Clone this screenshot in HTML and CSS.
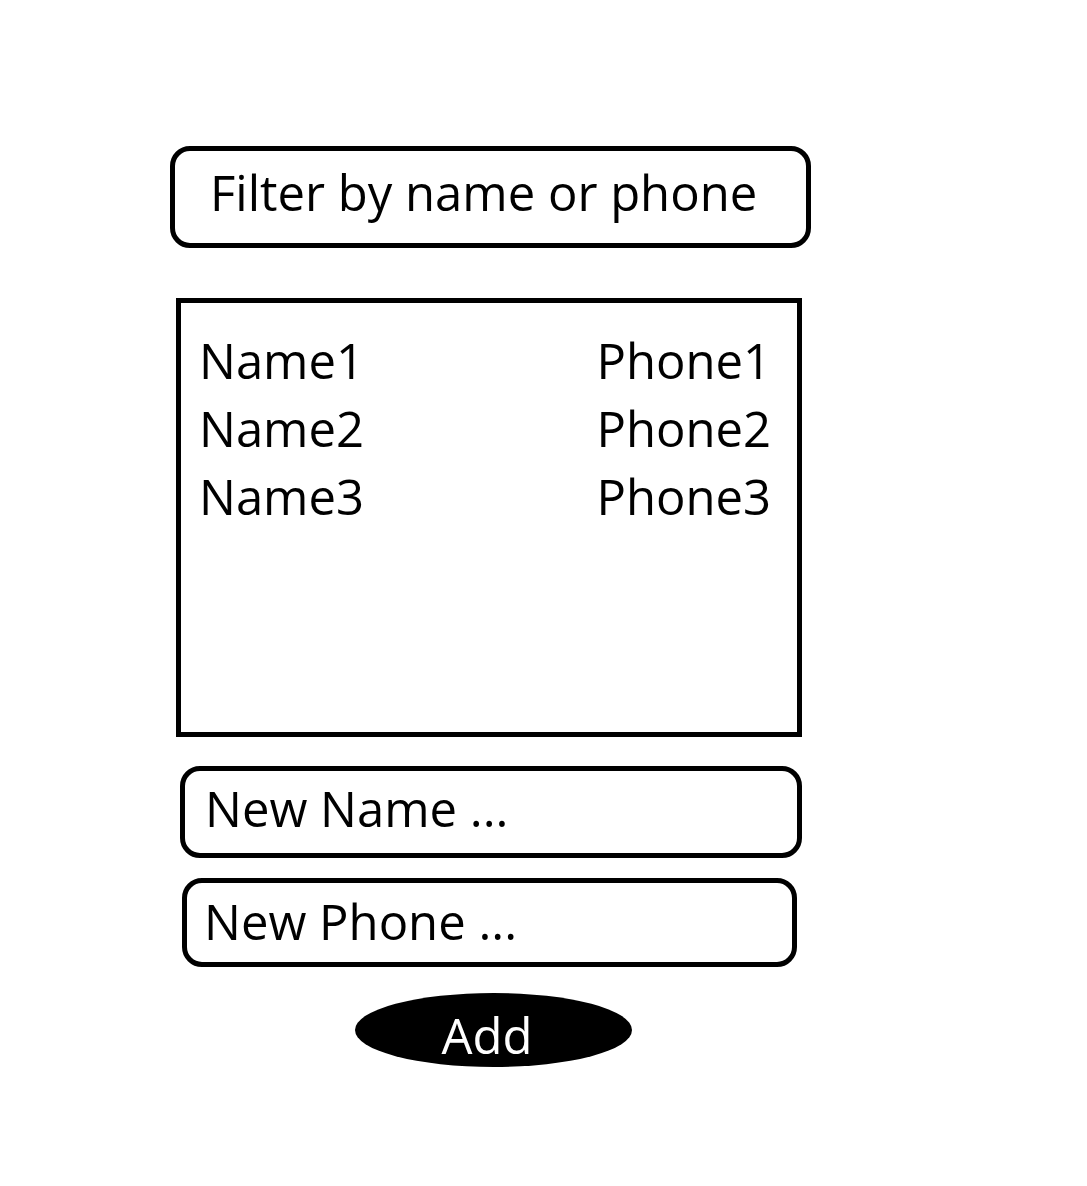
FILE: index.html
```html
<!DOCTYPE html>
<html lang="en">
<head>
<meta charset="utf-8">
<meta name="viewport" content="width=device-width, initial-scale=1">
<title>Phonebook</title>
<link rel="stylesheet" href="styles.css">
</head>
<body>
<main class="phonebook">
  <input class="field field-filter" type="search" aria-label="Filter by name or phone" placeholder="Filter by name or phone">
  <section class="contacts" aria-label="Contacts">
    <table class="contacts-table">
      <tbody>
        <tr><td>Name1</td><td class="phone">Phone1</td></tr>
        <tr><td>Name2</td><td class="phone">Phone2</td></tr>
        <tr><td>Name3</td><td class="phone">Phone3</td></tr>
      </tbody>
    </table>
  </section>
  <form class="new-contact">
    <input class="field field-name" type="text" aria-label="New Name" placeholder="New Name ...">
    <input class="field field-phone" type="tel" aria-label="New Phone" placeholder="New Phone ...">
    <button class="add" type="button">Add</button>
  </form>
</main>
</body>
</html>
```
FILE: styles.css
```css
* {
  box-sizing: border-box;
}

body {
  margin: 0;
  background: #fff;
  color: #000;
  font-family: "Open Sans", "Noto Sans", sans-serif;
  font-size: 49px;
  line-height: 68px;
}

.phonebook {
  display: flex;
  flex-direction: column;
  padding: 146px 276px 118px 170px;
}

.field {
  display: block;
  min-width: 0;
  margin: 0;
  border: 5px solid #000;
  border-radius: 20px;
  background: transparent;
  color: inherit;
  font: inherit;
  appearance: none;
}

.field::placeholder {
  color: #000;
  opacity: 1;
}

.field-filter {
  height: 102px;
  padding: 0 20px 10px 35px;
}

.contacts {
  min-height: 439px;
  margin: 50px 9px 0 6px;
  padding: 23px 26px 24px 18px;
  border: 5px solid #000;
}

.contacts-table {
  width: 100%;
  border-collapse: collapse;
}

.contacts-table td {
  height: 68px;
  padding: 0;
}

.contacts-table .phone {
  text-align: right;
}

.new-contact {
  display: flex;
  flex-direction: column;
  margin: 29px 9px 0 10px;
}

.field-name {
  height: 92px;
  padding: 0 18px 8px 20px;
}

.field-phone {
  height: 89px;
  margin: 20px 5px 0 2px;
  padding: 0 16px 4px 17px;
}

.add {
  align-self: center;
  width: 277px;
  height: 74px;
  margin: 26px 0 0 4px;
  padding: 8px 12px 0 0;
  border: 0;
  border-radius: 50%;
  background: #000;
  color: #fff;
  font: inherit;
  cursor: pointer;
}
```
